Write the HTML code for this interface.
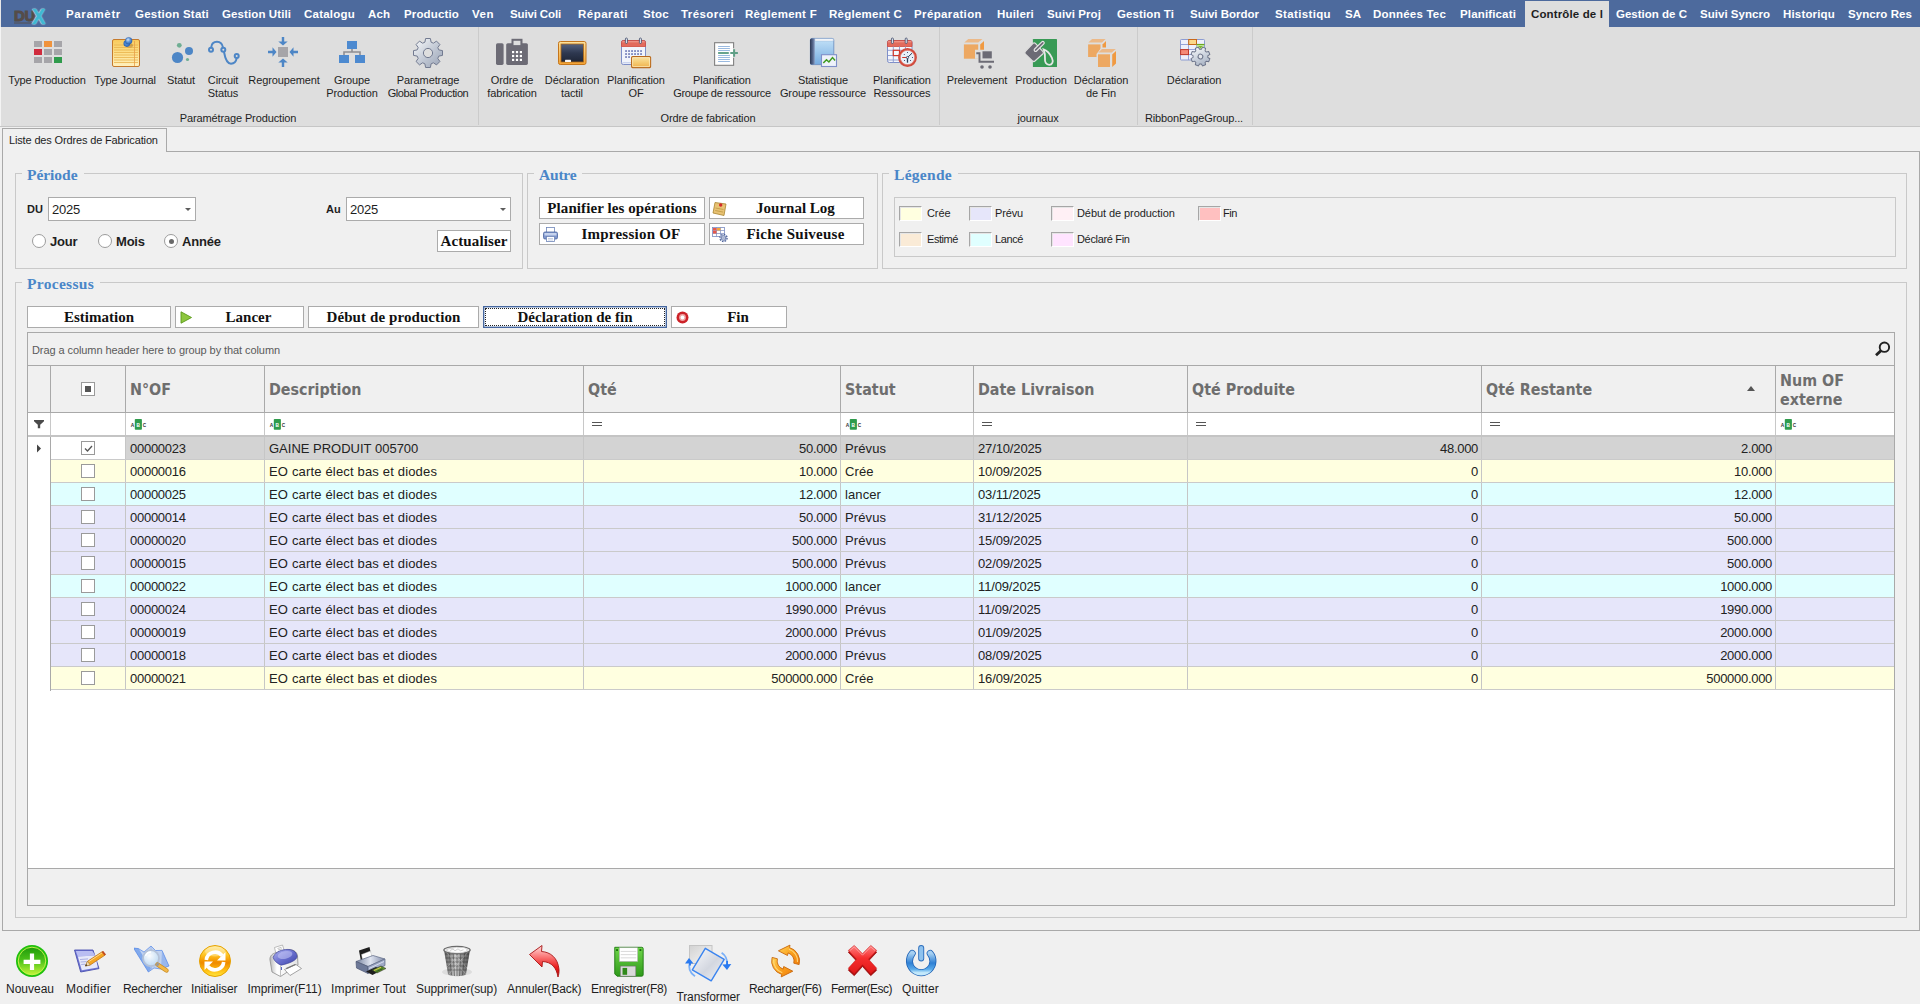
<!DOCTYPE html>
<html lang="fr">
<head>
<meta charset="utf-8">
<title>Liste des Ordres de Fabrication</title>
<style>
*{box-sizing:border-box;margin:0;padding:0}
html,body{width:1920px;height:1004px;overflow:hidden;background:#f0f0f0;font-family:"Liberation Sans","DejaVu Sans",sans-serif;font-size:11px;color:#1e1e1e}
.abs{position:absolute}
#topbar{position:absolute;left:0;top:0;width:1920px;height:27px;background:#4d6a9d}
#topbar .edge{position:absolute;left:0;top:0;width:1px;height:27px;background:#e8e8e8}
.mt{position:absolute;top:0;height:27px;line-height:29px;color:#fff;font-weight:bold;font-size:11.5px;white-space:nowrap}
.mt.act{color:#1e1e1e}
#acttab{position:absolute;left:1525px;top:1px;width:84px;height:26px;background:#dedede}
#ribbon{position:absolute;left:0;top:27px;width:1920px;height:99px;background:#dedede}
#ribbon .edge{position:absolute;left:0;top:0;width:1px;height:99px;background:#f4f4f4}
.rsep{position:absolute;top:0;width:1px;height:98px;background:#cbcbcb}
.ri{letter-spacing:-0.12px;position:absolute;top:47px;width:140px;margin-left:-70px;text-align:center;font-size:11px;line-height:13px;color:#1e1e1e;white-space:nowrap}
.ric{position:absolute;top:10px;width:32px;height:32px;margin-left:-16px;overflow:visible}
.rcap{letter-spacing:-0.12px;position:absolute;top:84px;width:200px;margin-left:-100px;text-align:center;font-size:11px;line-height:14px;color:#1e1e1e;white-space:nowrap}
#ribline{position:absolute;left:0;top:126px;width:1920px;height:1px;background:#c6c6c6}
/* doc tab */
#doctab{position:absolute;left:2px;top:128px;width:165px;height:24px;border:1px solid #a9a9a9;border-bottom:none;background:#f0f0f0;font-size:11px;line-height:23px;padding-left:6px;white-space:nowrap;letter-spacing:-0.15px}
#panel{position:absolute;left:2px;top:151px;width:1918px;height:780px;border:1px solid #a9a9a9;border-top:none}
#panelTop{position:absolute;left:166px;top:151px;width:1754px;height:1px;background:#a9a9a9}
.gb{position:absolute;border:1px solid #c9c9c9}
.gbt{position:absolute;font-family:"Liberation Serif","DejaVu Serif",serif;font-weight:bold;font-size:15.5px;line-height:18px;color:#4a86c8;background:#f0f0f0;padding:0 6px 0 5px;white-space:nowrap}
.btn{position:absolute;background:#fff;border:1px solid #ababab;font-family:"Liberation Serif","DejaVu Serif",serif;font-weight:bold;font-size:15px;text-align:center;white-space:nowrap;color:#111}
.cmb{position:absolute;background:#fff;border:1px solid #ababab;height:24px;font-size:13px;line-height:24px;padding-left:3px;letter-spacing:-0.25px}
.cmb i{position:absolute;right:4px;top:10px;width:0;height:0;border-left:3px solid transparent;border-right:3px solid transparent;border-top:3px solid #5c5c5c}
.lbl{position:absolute;font-weight:bold;font-size:11px;line-height:14px;white-space:nowrap}
.rad{position:absolute;width:14px;height:14px;border:1px solid #9c9c9c;border-radius:50%;background:#fff}
.rad.on::after{content:"";position:absolute;left:3.5px;top:3.5px;width:5px;height:5px;border-radius:50%;background:#686868}
.rlbl{position:absolute;font-weight:bold;font-size:13px;line-height:16px;white-space:nowrap;letter-spacing:-0.2px}
.sw{position:absolute;width:23px;height:15px;border:1px solid #a6a6a6;border-right-color:#fff;border-bottom-color:#fff;box-shadow:inset 1px 1px 0 #e6e6e6}
.lg{position:absolute;font-size:11px;line-height:14px;white-space:nowrap}
/* grid */
#grid{position:absolute;left:27px;top:332px;width:1868px;height:574px;border:1px solid #a9a9a9;background:#fff;overflow:hidden}
#gpanel{position:absolute;left:0;top:0;width:1866px;height:33px;background:#f0f0f0;border-bottom:1px solid #a9a9a9;font-size:11px;line-height:35px;color:#5a5a5a;padding-left:4px;letter-spacing:-0.08px}
#ghead{position:absolute;left:0;top:33px;width:1866px;height:47px;background:#f0f0f0;border-bottom:1px solid #a9a9a9}
.hc{position:absolute;top:0;height:46px;border-left:1px solid #a9a9a9;font-family:"DejaVu Sans","Liberation Sans",sans-serif;font-weight:bold;font-size:16px;color:#6e6e6e;padding-left:3.5px;line-height:47px;white-space:nowrap}
.hx{display:inline-block;transform:scaleX(.894);transform-origin:0 50%}
#gfilter{position:absolute;left:0;top:80px;width:1866px;height:24px;background:#fff;border-bottom:2px solid #c4c4c4}
.fc{position:absolute;top:0;height:22px;border-left:1px solid #c8c8c8}
.row{position:absolute;left:23px;width:1843px;height:23px;border-bottom:1px solid #cacaca;font-size:13px;line-height:23px;color:#222}
.row span{position:absolute;top:0;height:22px;border-left:1px solid #c6c6c6;padding:0 3px 0 4px;white-space:nowrap;overflow:hidden}
.row span.r{text-align:right}
.cb{position:absolute;left:30px;top:4px;width:14px;height:14px;border:1px solid #9a9a9a;background:#fff}
#gfoot{position:absolute;left:0;top:535px;width:1866px;height:37px;background:#f0f0f0;border-top:1px solid #a9a9a9}
.bt{position:absolute;font-size:12px;line-height:15px;white-space:nowrap;color:#1e1e1e}
.bi{position:absolute;top:943px;width:36px;height:36px;margin-left:-18px}
#bfoc{border:1px solid #46679f;box-shadow:inset 0 0 0 .5px #6f8cbc}
#bfoc::after{content:"";position:absolute;left:1px;top:1px;right:1px;bottom:1px;border:1px dotted #222}
</style>
</head>
<body>
<div id="topbar"><div id="acttab"></div><div style="position:absolute;left:14px;top:6px;font-weight:bold;font-size:15px;line-height:19px;color:#554c48;-webkit-text-stroke:1px #554c48;letter-spacing:-.3px;white-space:nowrap">DU</div><div style="position:absolute;left:14px;top:22px;width:18px;height:2px;background:#554c48;opacity:.45"></div><div style="position:absolute;left:31.500px;top:5px;font-weight:bold;font-size:21.500px;line-height:24px;color:#3fb8d2;-webkit-text-stroke:.7px #3fb8d2;white-space:nowrap;text-shadow:0 0 1.500px #fff,0 0 1.500px #fff;transform:scaleX(.92);transform-origin:0 0">X</div><div class="edge"></div>
<div class="mt" style="left:66px;letter-spacing:0.64px">Paramètr</div>
<div class="mt" style="left:135px;letter-spacing:0.24px">Gestion Stati</div>
<div class="mt" style="left:222px;letter-spacing:0.10px">Gestion Utili</div>
<div class="mt" style="left:304px;letter-spacing:0.22px">Catalogu</div>
<div class="mt" style="left:368px;letter-spacing:0.09px">Ach</div>
<div class="mt" style="left:404px;letter-spacing:0.15px">Productio</div>
<div class="mt" style="left:472px;letter-spacing:0.51px">Ven</div>
<div class="mt" style="left:510px;letter-spacing:-0.14px">Suivi Coli</div>
<div class="mt" style="left:578px;letter-spacing:0.50px">Réparati</div>
<div class="mt" style="left:643px;letter-spacing:0.27px">Stoc</div>
<div class="mt" style="left:681px;letter-spacing:0.42px">Trésoreri</div>
<div class="mt" style="left:745px;letter-spacing:0.27px">Règlement F</div>
<div class="mt" style="left:829px;letter-spacing:0.25px">Règlement C</div>
<div class="mt" style="left:914px;letter-spacing:0.37px">Préparation</div>
<div class="mt" style="left:997px;letter-spacing:0.17px">Huileri</div>
<div class="mt" style="left:1047px;letter-spacing:0.10px">Suivi Proj</div>
<div class="mt" style="left:1117px;letter-spacing:0.10px">Gestion Ti</div>
<div class="mt" style="left:1190px;letter-spacing:-0.00px">Suivi Bordor</div>
<div class="mt" style="left:1275px;letter-spacing:0.36px">Statistiqu</div>
<div class="mt" style="left:1345px;letter-spacing:0.01px">SA</div>
<div class="mt" style="left:1373px;letter-spacing:0.21px">Données Tec</div>
<div class="mt" style="left:1460px;letter-spacing:0.15px">Planificati</div>
<div class="mt act" style="left:1531px;letter-spacing:0.13px">Contrôle de l</div>
<div class="mt" style="left:1616px;letter-spacing:0.01px">Gestion de C</div>
<div class="mt" style="left:1700px;letter-spacing:0.03px">Suivi Syncro</div>
<div class="mt" style="left:1783px;letter-spacing:0.17px">Historiqu</div>
<div class="mt" style="left:1848px;letter-spacing:0.07px">Syncro Res</div>
</div>
<div id="ribbon"><div class="edge"></div>
<!--RIBBON-START-->
<div class="rsep" style="left:478px"></div><div class="rsep" style="left:939px"></div><div class="rsep" style="left:1137px"></div><div class="rsep" style="left:1252px"></div>
<!-- 1 Type Production -->
<svg class="ric" style="left:47px" viewBox="0 0 32 32"><g fill="#a6a5a9"><rect x="3" y="4" width="8" height="6"/><rect x="23" y="4" width="8" height="6"/><rect x="13" y="12" width="8" height="6"/><rect x="23" y="12" width="8" height="6"/><rect x="3" y="20" width="8" height="6"/><rect x="13" y="20" width="8" height="6"/></g><rect x="13" y="4" width="8" height="6" fill="#f0933c"/><rect x="3" y="12" width="8" height="6" fill="#d02b3d"/><rect x="23" y="20" width="8" height="6" fill="#2f9b4c"/></svg>
<div class="ri" style="left:47px">Type Production</div>
<!-- 2 Type Journal -->
<svg class="ric" style="left:126px" viewBox="0 0 32 32"><defs><linearGradient id="nj" x1="0" y1="0" x2="0" y2="1"><stop offset="0" stop-color="#f9c95a"/><stop offset=".5" stop-color="#fde08c"/><stop offset="1" stop-color="#fff0bf"/></linearGradient><radialGradient id="pin" cx=".4" cy=".35" r=".7"><stop offset="0" stop-color="#cfe4fb"/><stop offset=".5" stop-color="#5b93d6"/><stop offset="1" stop-color="#2a5fa8"/></radialGradient></defs><rect x="2.5" y="2.5" width="27" height="27" rx="1.5" fill="url(#nj)" stroke="#c57a2c"/><g stroke="#e9b24c" stroke-width=".8"><path d="M4 8h24M4 10.5h24M4 13h24M4 15.5h24M4 18h24M4 20.5h24M4 23h24M4 25.5h24"/></g><path d="M24.5 4v25" stroke="#e7a04a" stroke-width=".8"/><ellipse cx="19.500" cy="8.500" rx="3.500" ry="2" fill="#8a5a20" opacity=".35"/><circle cx="16.800" cy="6.600" r="3.300" fill="#2f66b4"/><circle cx="16.800" cy="6.300" r="2.500" fill="#4a86d0"/><circle cx="18.700" cy="3.800" r="3.400" fill="url(#pin)" stroke="#2a5ca8" stroke-width=".5"/></svg>
<div class="ri" style="left:125px">Type Journal</div>
<!-- 3 Statut -->
<svg class="ric" style="left:181px" viewBox="0 0 32 32"><circle cx="12.5" cy="20.5" r="5.6" fill="#4d86c6"/><circle cx="24" cy="14" r="4" fill="#4d86c6"/><circle cx="14.3" cy="8.3" r="2.4" fill="#6fae93"/><circle cx="22.5" cy="22.5" r="1.6" fill="#6fae93"/></svg>
<div class="ri" style="left:181px">Statut</div>
<!-- 4 Circuit Status -->
<svg class="ric" style="left:223px" viewBox="0 0 32 32"><g fill="none" stroke="#4d86c6" stroke-width="2"><path d="M4.200 10.500C4.500 6.500 7 4.800 10 4.800c3.500 0 5.500 3 6 5.800M17 15c1 5.500 2.800 11.700 7 11.700 3.200 0 5.200-2.500 5.700-5.500"/><circle cx="4" cy="12.700" r="2"/><circle cx="16.300" cy="12.700" r="2"/><circle cx="29.700" cy="19" r="2"/></g></svg>
<div class="ri" style="left:223px">Circuit<br>Status</div>
<!-- 5 Regroupement -->
<svg class="ric" style="left:283px" viewBox="0 0 32 32"><rect x="11" y="10" width="10" height="10" fill="#a6a5a9"/><g fill="#4d86c6"><path d="M14.800 0h2.400v4.500h3.500L16 8.500 11.300 4.500h3.500z"/><path d="M14.800 30h2.400v-4.500h3.500L16 21.500 11.300 25.500h3.500z"/><path d="M1 13.800v2.400h4.500v3.500L9.500 15 5.500 10.300v3.500z"/><path d="M31 13.800v2.400h-4.500v3.500L22.500 15 26.500 10.300v3.500z"/></g></svg>
<div class="ri" style="left:284px">Regroupement</div>
<!-- 6 Groupe Production -->
<svg class="ric" style="left:352px" viewBox="0 0 32 32"><g fill="#4d8ad0"><rect x="11" y="4" width="10" height="8"/><rect x="3" y="18" width="10" height="8"/><rect x="19" y="18" width="10" height="8"/></g><path d="M16 12v3.500M8 18v-3h16v3" fill="none" stroke="#8e8e93" stroke-width="1.600"/></svg>
<div class="ri" style="left:352px">Groupe<br>Production</div>
<!-- 7 Parametrage Global -->
<svg class="ric" style="left:428px" viewBox="0 0 32 32"><defs><linearGradient id="gg" x1="0" y1="0" x2="1" y2="1"><stop offset="0" stop-color="#fbfcfd"/><stop offset=".55" stop-color="#c0c7d3"/><stop offset="1" stop-color="#98a2b5"/></linearGradient></defs><path id="gearp" fill="url(#gg)" stroke="#727a90" stroke-width="1" d="M13.600 1.500h4.800l.7 3.700 2.300 1 3.100-2.100 3.400 3.400-2.100 3.100 1 2.300 3.700.7v4.800l-3.700.7-1 2.300 2.100 3.100-3.400 3.400-3.100-2.100-2.300 1-.7 3.700h-4.800l-.7-3.700-2.300-1-3.100 2.100-3.400-3.400 2.100-3.100-1-2.300-3.700-.7v-4.800l3.700-.7 1-2.300-2.100-3.100 3.400-3.400 3.100 2.100 2.300-1z"/><circle cx="16" cy="16" r="4.600" fill="#dedede" stroke="#727a90" stroke-width="1"/></svg>
<div class="ri" style="left:428px">Parametrage<br><span style="letter-spacing:-0.4px">Global Production</span></div>
<!-- 8 Ordre de fabrication (fax) -->
<svg class="ric" style="left:512px" viewBox="0 0 32 32"><g fill="#6c6b75"><rect x="0" y="6.200" width="7.600" height="21.700" rx="1.600"/><rect x="10.200" y="6.200" width="21.700" height="21.700" rx="1.600"/><rect x="15.500" y="1.800" width="11" height="6"/></g><rect x="17.500" y="3.800" width="6.900" height="4.300" fill="#dedede"/><g fill="#fff"><rect x="16" y="14" width="2.200" height="2.200"/><rect x="19.900" y="14" width="2.200" height="2.200"/><rect x="23.800" y="14" width="2.200" height="2.200"/><rect x="16" y="17.900" width="2.200" height="2.200"/><rect x="19.900" y="17.900" width="2.200" height="2.200"/><rect x="23.800" y="17.900" width="2.200" height="2.200"/><rect x="16" y="21.800" width="2.200" height="2.200"/><rect x="19.900" y="21.800" width="2.200" height="2.200"/><rect x="23.800" y="21.800" width="2.200" height="2.200"/></g></svg>
<div class="ri" style="left:512px">Ordre de<br>fabrication</div>
<!-- 9 Déclaration tactil -->
<svg class="ric" style="left:572px" viewBox="0 0 32 32"><defs><linearGradient id="bb" x1="0" y1="0" x2="0" y2="1"><stop offset="0" stop-color="#55627f"/><stop offset=".5" stop-color="#2e3850"/><stop offset="1" stop-color="#1e2536"/></linearGradient><linearGradient id="bf" x1="0" y1="0" x2="0" y2="1"><stop offset="0" stop-color="#fde3a0"/><stop offset="1" stop-color="#f3a233"/></linearGradient></defs><rect x="2.500" y="4.500" width="27.500" height="23" rx="1.800" fill="url(#bf)" stroke="#c5761c"/><rect x="5" y="7" width="22.500" height="18" fill="url(#bb)" stroke="#b06a1a" stroke-width=".8"/><rect x="9" y="22.800" width="6" height="2.300" rx=".5" fill="#f4f4f4"/></svg>
<div class="ri" style="left:572px">Déclaration<br>tactil</div>
<!-- 10 Planification OF -->
<svg class="ric" style="top:9px;left:636px" viewBox="0 0 32 32"><defs><linearGradient id="cal" x1="0" y1="0" x2="0" y2="1"><stop offset="0" stop-color="#ffffff"/><stop offset="1" stop-color="#dfe6f3"/></linearGradient><linearGradient id="og" x1="0" y1="0" x2="0" y2="1"><stop offset="0" stop-color="#fae3a4"/><stop offset=".5" stop-color="#f5cd76"/><stop offset="1" stop-color="#efb04a"/></linearGradient></defs><rect x="1.500" y="4.500" width="24" height="24" rx="1.800" fill="#f1f4fb" stroke="#7f8fc8"/><path d="M2.500 26.700h22" stroke="#c5d0ec" stroke-width="1.200"/><path d="M1.500 10.500V6.300a1.800 1.800 0 0 1 1.800-1.800h20.400a1.800 1.800 0 0 1 1.800 1.800v4.200z" fill="#e26a5c" stroke="#cf4a3c" stroke-width=".8"/><path d="M2.300 5.800h22.400" stroke="#f2a094" stroke-width="1"/><g fill="#8590c2"><rect x="5.1" y="14.1" width="1.900" height="1.900"/><rect x="8.1" y="14.1" width="1.900" height="1.900"/><rect x="11.1" y="14.1" width="1.900" height="1.900"/><rect x="14.1" y="14.1" width="1.900" height="1.900"/><rect x="17.1" y="14.1" width="1.900" height="1.900"/><rect x="20.1" y="14.1" width="1.900" height="1.900"/><rect x="5.1" y="17.1" width="1.900" height="1.900"/><rect x="8.1" y="17.1" width="1.900" height="1.900"/><rect x="11.1" y="17.1" width="1.900" height="1.900"/><rect x="14.1" y="17.1" width="1.900" height="1.900"/><rect x="17.1" y="17.1" width="1.900" height="1.900"/><rect x="20.1" y="17.1" width="1.900" height="1.900"/><rect x="5.1" y="20.1" width="1.900" height="1.900"/><rect x="8.1" y="20.1" width="1.900" height="1.900"/></g><rect x="5.400" y="2" width="2" height="5.500" rx="1" fill="#e6ebf4" stroke="#3c4866" stroke-width=".8"/><rect x="19.400" y="2" width="2" height="5.500" rx="1" fill="#e6ebf4" stroke="#3c4866" stroke-width=".8"/><rect x="11.600" y="20.600" width="19" height="11" rx="1" fill="url(#og)" stroke="#b8681a" stroke-width="1.100"/><rect x="12.600" y="21.600" width="17" height="9" rx=".5" fill="none" stroke="#fdf0c8" stroke-width=".7"/></svg>
<div class="ri" style="left:636px">Planification<br>OF</div>
<!-- 11 Planification Groupe de ressource -->
<svg class="ric" style="top:9px;left:725px" viewBox="0 0 32 32"><rect x="5.600" y="6.700" width="19" height="22.600" fill="#fff" stroke="#808080" stroke-width="1.100"/><rect x="20.300" y="12.200" width="9.600" height="9.600" fill="#dedede"/><rect x="20.300" y="12.200" width="3.700" height="9.600" fill="#fff"/><path d="M9.100 10.500h11.800M9.100 12.500h11.800M9.100 14.500h11.800M9.100 19.500h11.800M9.100 21.500h11.800M9.100 23.500h11.800M9.100 25.500h11.800" stroke="#8fb2dc" stroke-width=".9"/><path d="M9.100 17h10.700" stroke="#5f9f86" stroke-width="1.900"/><path d="M21.300 17h7.600M25.100 13.200v7.600" stroke="#5f9f86" stroke-width="2"/></svg>
<div class="ri" style="left:722px">Planification<br><span style="letter-spacing:-0.3px">Groupe de ressource</span></div>
<!-- 12 Statistique Groupe ressource -->
<svg class="ric" style="top:9px;left:823px" viewBox="0 0 32 32"><defs><linearGradient id="bk" x1="0" y1="0" x2="0" y2="1"><stop offset="0" stop-color="#c4e2f8"/><stop offset="1" stop-color="#76ace0"/></linearGradient><linearGradient id="bks" x1="0" y1="0" x2="1" y2="0"><stop offset="0" stop-color="#2c3854"/><stop offset=".6" stop-color="#56688e"/><stop offset="1" stop-color="#8a9cc0"/></linearGradient></defs><rect x="3.400" y="2.400" width="23.400" height="26.200" rx="1.600" fill="url(#bk)" stroke="#6f92c4" stroke-width=".9"/><path d="M7.800 2.800h18.500v2.200H7.800z" fill="#fff" stroke="#9fb4d4" stroke-width=".5"/><path d="M3 4a1.600 1.600 0 0 1 1.600-1.600h3.200v26.200H4.600A1.600 1.600 0 0 1 3 27z" fill="url(#bks)"/><rect x="14.500" y="18.700" width="15" height="11.800" fill="#eef2fa" stroke="#7f8fc8" stroke-width="1.100"/><path d="M16.300 27l3.200-3.200 2.400 2.200 3.600-4.400 2.600 2.800" fill="none" stroke="#3f9a1f" stroke-width="1.500"/></svg>
<div class="ri" style="left:823px">Statistique<br>Groupe ressource</div>
<!-- 13 Planification Ressources -->
<svg class="ric" style="top:9px;left:902px" viewBox="0 0 32 32"><rect x="1.500" y="4.500" width="24.500" height="22" rx="1.800" fill="#f4f6fc" stroke="#7f8fc8"/><path d="M1.500 10.500V6.300a1.800 1.800 0 0 1 1.800-1.800h20.900a1.800 1.800 0 0 1 1.800 1.800v4.200z" fill="#e26a5c" stroke="#cf4a3c" stroke-width=".8"/><path d="M2 5.800h23.500" stroke="#f2a094" stroke-width="1"/><path d="M2 14.300h23.500M2 19.500h23.500M2 24h23.500M7.300 10.500v16M13.500 10.500v16M19.500 10.500v16" stroke="#8a99cf" stroke-width=".9"/><rect x="7.300" y="14.300" width="6.200" height="5.300" fill="#f4f6fc" stroke="#d0362a" stroke-width="1.200"/><rect x="5.400" y="2" width="2" height="5.500" rx="1" fill="#e6ebf4" stroke="#3c4866" stroke-width=".8"/><rect x="19.200" y="2" width="2" height="5.500" rx="1" fill="#e6ebf4" stroke="#3c4866" stroke-width=".8"/><circle cx="21.500" cy="21.500" r="8.200" fill="#e8f1f9" stroke="#cf4a3c" stroke-width="2.400"/><circle cx="21.500" cy="21.500" r="7.300" fill="none" stroke="#e98b7f" stroke-width=".7"/><g fill="#2d3f66"><circle cx="21.500" cy="16.500" r=".55"/><circle cx="18.300" cy="18.500" r=".55"/><circle cx="26.500" cy="21.500" r=".55"/><circle cx="18.500" cy="24.500" r=".55"/><circle cx="24.500" cy="24.500" r=".55"/></g><path d="M21.500 21.500L26 17.200" stroke="#2a3a58" stroke-width="1"/><path d="M21.500 21.500v5.200" stroke="#2a3a58" stroke-width="1.300"/><path d="M16.200 21.500h5.300" stroke="#d0362a" stroke-width="1"/><circle cx="21.500" cy="21.500" r="1.100" fill="#e8f1f9" stroke="#2a3a58" stroke-width=".7"/></svg>
<div class="ri" style="left:902px">Planification<br>Ressources</div>
<!-- 14 Prelevement -->
<svg class="ric" style="left:977px" viewBox="0 0 32 32"><path d="M3.300 5.600L7.300 2.100h14.200l-4.300 3.500z" fill="#ecb988"/><path d="M19.200 7.400L23 3.900v14l-3.800 3.800z" fill="#f09a42"/><rect x="2.900" y="7.400" width="14.300" height="14.300" fill="#eda862"/><path d="M14 12.800h18v14h-12.500v-5h-5.500z" fill="#dedede"/><rect x="21.500" y="14.300" width="9.300" height="7.100" fill="#6c6b75"/><path d="M15.300 16.300h3.200v8.400h14.500" fill="none" stroke="#6c6b75" stroke-width="1.900"/><circle cx="21" cy="30" r="1.800" fill="#6c6b75"/><circle cx="29" cy="30" r="1.800" fill="#6c6b75"/></svg>
<div class="ri" style="left:977px">Prelevement</div>
<!-- 15 Production -->
<svg class="ric" style="left:1041px" viewBox="0 0 32 32"><rect x="7.900" y="1.900" width="24.100" height="28.100" rx=".6" fill="#389a55"/><path d="M18.600 12.300c3.500 1 6.300 4.300 8.300 8.500 1.800 4 .3 7-2.700 7-3 0-4.600-2.700-4.200-6 .3-3-.2-6.300-1.400-9.500z" fill="#389a55" stroke="#e6e6e6" stroke-width="1.800"/><path d="M8 6.400c.7-.7 1.700-.7 2.400 0L18 14.600c.6.700.6 1.400 0 2.100l-7.800 7.100c-.8.800-2 .8-2.800 0l-7-6.700c-.8-.9-.8-1.900 0-2.800z" fill="#6c6b75" stroke="#dedede" stroke-width="1.200" stroke-linejoin="round"/><path d="M10.600 13L17.800 5.800" stroke="#e6e6e6" stroke-width="4" stroke-linecap="round"/><path d="M10.600 13L17.800 5.800" stroke="#6c6b75" stroke-width="1.700" stroke-linecap="round"/></svg>
<div class="ri" style="left:1041px">Production</div>
<!-- 16 Déclaration de Fin -->
<svg class="ric" style="left:1101px" viewBox="0 0 32 32"><path d="M3.300 5.600L7.100 2.100h13.500L17 5.600z" fill="#ecb988"/><path d="M17.500 7.400L21 3.900v12.500l-3.500 3.500z" fill="#f09a42"/><rect x="3.100" y="7.400" width="12.400" height="12.600" fill="#eda862"/><path d="M11.500 17l5-6.500h15.500v15l-5 6h-15.500z" fill="#dedede"/><path d="M13.300 15.500L17 12h13.800l-4 3.500z" fill="#ecb988"/><path d="M27.200 17.500L31 14v12.500l-3.800 3.500z" fill="#f09a42"/><rect x="13" y="17.300" width="12" height="12.700" fill="#eda862"/></svg>
<div class="ri" style="left:1101px">Déclaration<br>de Fin</div>
<!-- 17 Déclaration -->
<svg class="ric" style="left:1195px" viewBox="0 0 32 32"><rect x="1.500" y="2.500" width="24" height="20.500" rx=".8" fill="#eef0fb" stroke="#8c9cd2"/><path d="M1.500 7.500h24M1.500 12.500h24M1.500 17.500h24M9.500 2.500v20.500M17.500 2.500v20.500" stroke="#8c9cd2" stroke-width=".9"/><rect x="9.700" y="2.500" width="7.800" height="5" fill="#fbd98a" stroke="#c8681a" stroke-width="1"/><rect x="1.600" y="12.600" width="7.900" height="5" fill="#f58a78" stroke="#c0392b" stroke-width="1"/><rect x="17.600" y="7.600" width="7.400" height="4.400" fill="#c8e8a0"/><path d="M17.500 7.500h8" stroke="#6aa820" stroke-width="1.200"/><path d="M19.500 9h4l-2 2.600z" fill="#7ab830"/><defs><linearGradient id="gg2" x1="0" y1="0" x2="1" y2="1"><stop offset="0" stop-color="#ffffff"/><stop offset=".5" stop-color="#ccd3de"/><stop offset="1" stop-color="#9aa5b8"/></linearGradient></defs><g transform="translate(10.900,9) scale(.66) rotate(22.500 16 16)"><path d="M13.600 1.500h4.800l.7 3.700 2.300 1 3.100-2.100 3.400 3.400-2.100 3.100 1 2.300 3.700.7v4.800l-3.700.7-1 2.300 2.100 3.100-3.400 3.400-3.100-2.100-2.300 1-.7 3.700h-4.800l-.7-3.700-2.300-1-3.100 2.100-3.400-3.400 2.100-3.100-1-2.300-3.700-.7v-4.800l3.700-.7 1-2.300-2.100-3.100 3.400-3.400 3.100 2.100 2.300-1z" fill="url(#gg2)" stroke="#6a7288" stroke-width="1.400"/><circle cx="16" cy="16" r="3.600" fill="#e4e6ec" stroke="#6a7288" stroke-width="1.500"/></g></svg>
<div class="ri" style="left:1194px">Déclaration</div>
<div class="rcap" style="left:238px">Paramétrage Production</div>
<div class="rcap" style="left:708px">Ordre de fabrication</div>
<div class="rcap" style="left:1038px">journaux</div>
<div class="rcap" style="left:1194px">RibbonPageGroup...</div>
<!--RIBBON-END-->
</div>
<div id="ribline"></div>
<div id="doctab">Liste des Ordres de Fabrication</div>
<div id="panelTop"></div>
<div id="panel"></div>
<!--FORM-START-->
<!-- Période -->
<div class="gb" style="left:15px;top:173px;width:508px;height:96px"></div>
<div class="gbt" style="left:22px;top:166px;letter-spacing:-0.04px">Période</div>
<div class="lbl" style="left:27px;top:202px">DU</div>
<div class="cmb" style="left:48px;top:197px;width:148px">2025<i></i></div>
<div class="lbl" style="left:326px;top:202px">Au</div>
<div class="cmb" style="left:346px;top:197px;width:165px">2025<i></i></div>
<div class="rad" style="left:32px;top:234px"></div><div class="rlbl" style="left:50px;top:234px">Jour</div>
<div class="rad" style="left:98px;top:234px"></div><div class="rlbl" style="left:116px;top:234px">Mois</div>
<div class="rad on" style="left:164px;top:234px"></div><div class="rlbl" style="left:182px;top:234px">Année</div>
<div class="btn" style="left:437px;top:230px;width:74px;height:22px;line-height:20px;letter-spacing:.1px">Actualiser</div>
<!-- Autre -->
<div class="gb" style="left:527px;top:173px;width:351px;height:96px"></div>
<div class="gbt" style="left:534px;top:166px;letter-spacing:-0.21px">Autre</div>
<div class="btn" style="left:539px;top:197px;width:166px;height:22px;line-height:20px;letter-spacing:.09px">Planifier les opérations</div>
<div class="btn" style="left:709px;top:197px;width:155px;height:22px;line-height:20px;padding-left:18px">Journal Log<svg style="position:absolute;left:2px;top:2px" width="17" height="17" viewBox="0 0 17 17"><path d="M3 2.500l11 1.500-2 11.500-11-2.500z" fill="#e8c274" stroke="#a8842f" stroke-width=".8"/><path d="M3.500 8l8 1.500M3.200 10.500l8 1.600" stroke="#b8923a" stroke-width=".7"/><circle cx="8.700" cy="5" r="1.700" fill="#d22a2a"/></svg></div>
<div class="btn" style="left:539px;top:223px;width:166px;height:22px;line-height:20px;padding-left:18px;letter-spacing:.23px">Impression OF<svg style="position:absolute;left:2px;top:2px" width="17" height="17" viewBox="0 0 17 17"><rect x="4.500" y="1.500" width="8" height="5" fill="#fff" stroke="#6e86b8" stroke-width=".8"/><rect x="1.500" y="6" width="14" height="7" rx="1.500" fill="#7f96cc" stroke="#4a64a0" stroke-width=".8"/><rect x="2.500" y="7" width="12" height="2.500" fill="#c6d3ee"/><rect x="4.500" y="10.500" width="8" height="5" fill="#fff" stroke="#6e86b8" stroke-width=".8"/><path d="M6 12.500h5M6 14h5" stroke="#9fb0d2" stroke-width=".6"/></svg></div>
<div class="btn" style="left:709px;top:223px;width:155px;height:22px;line-height:20px;padding-left:18px;letter-spacing:.26px">Fiche Suiveuse<svg style="position:absolute;left:2px;top:3px" width="17" height="16" viewBox="0 0 17 16"><rect x=".5" y=".5" width="12" height="9" fill="#fff" stroke="#7a8cc0" stroke-width=".8"/><path d="M.5 3.500h12M.5 6.500h12M4.500 .5v9M8.500 .5v9" stroke="#7a8cc0" stroke-width=".7"/><rect x="1" y="1" width="3.500" height="2.500" fill="#e8584a"/><rect x="5" y="1" width="3.500" height="2.500" fill="#f2a53a"/><rect x="1" y="4" width="3.500" height="2.500" fill="#e8584a"/><circle cx="11.500" cy="11" r="3.600" fill="#dfe5f2" stroke="#4a5f98" stroke-width="1.300" stroke-dasharray="1.500 1.300"/><circle cx="11.500" cy="11" r="2.300" fill="#eef2fa" stroke="#4a5f98" stroke-width=".8"/><circle cx="11.500" cy="11" r=".9" fill="#fff" stroke="#4a5f98" stroke-width=".6"/></svg></div>
<!-- Légende -->
<div class="gb" style="left:882px;top:173px;width:1025px;height:96px"></div>
<div class="gbt" style="left:889px;top:166px;letter-spacing:.29px">Légende</div>
<div class="gb" style="left:894px;top:197px;width:1002px;height:60px"></div>
<div class="sw" style="left:899px;top:206px;background:#ffffe0"></div><div class="lg" style="left:927px;top:206px;letter-spacing:-0.11px">Crée</div>
<div class="sw" style="left:969px;top:206px;background:#e6e6fa"></div><div class="lg" style="left:995px;top:206px;letter-spacing:-0.15px">Prévu</div>
<div class="sw" style="left:1051px;top:206px;background:#fff0f5"></div><div class="lg" style="left:1077px;top:206px;letter-spacing:-0.07px">Début de production</div>
<div class="sw" style="left:1198px;top:206px;background:#ffc0c0"></div><div class="lg" style="left:1223px;top:206px;letter-spacing:-0.43px">Fin</div>
<div class="sw" style="left:899px;top:232px;background:#faebd7"></div><div class="lg" style="left:927px;top:232px;letter-spacing:-0.44px">Estimé</div>
<div class="sw" style="left:969px;top:232px;background:#e0ffff"></div><div class="lg" style="left:995px;top:232px;letter-spacing:-0.4px">Lancé</div>
<div class="sw" style="left:1051px;top:232px;background:#ffe4ff"></div><div class="lg" style="left:1077px;top:232px;letter-spacing:-0.33px">Déclaré Fin</div>
<!-- Processus -->
<div class="gb" style="left:15px;top:282px;width:1892px;height:636px"></div>
<div class="gbt" style="left:22px;top:275px;letter-spacing:.3px">Processus</div>
<div class="btn" style="left:27px;top:306px;width:144px;height:22px;line-height:20px">Estimation</div>
<div class="btn" style="left:175px;top:306px;width:129px;height:22px;line-height:20px;padding-left:18px">Lancer<svg style="position:absolute;left:4px;top:4px" width="12" height="13" viewBox="0 0 12 13"><path d="M1 .8l10.500 5.700L1 12.200z" fill="#8dc63f" stroke="#5a9a1a" stroke-width=".9" stroke-linejoin="round"/></svg></div>
<div class="btn" style="left:308px;top:306px;width:171px;height:22px;line-height:20px;letter-spacing:.09px">Début de production</div>
<div class="btn" id="bfoc" style="left:483px;top:306px;width:184px;height:22px;line-height:20px">Déclaration de fin</div>
<div class="btn" style="left:671px;top:306px;width:116px;height:22px;line-height:20px;padding-left:18px">Fin<svg style="position:absolute;left:4px;top:4px" width="13" height="13" viewBox="0 0 13 13"><circle cx="6.500" cy="6.500" r="6" fill="#cc2228"/><circle cx="6.500" cy="6.500" r="3.400" fill="#f0a4a4"/><circle cx="6.500" cy="6.500" r="1.900" fill="#fff"/></svg></div>
<!--FORM-END-->
<!--GRID-START-->
<div id="grid">
<div id="gpanel">Drag a column header here to group by that column<svg style="position:absolute;left:1844px;top:7px" width="18" height="18" viewBox="0 0 18 18"><circle cx="12.400" cy="7.200" r="4.700" fill="none" stroke="#222" stroke-width="1.900"/><path d="M9 10.600L4 15.200" stroke="#222" stroke-width="2.800"/></svg></div>
<div id="ghead">
<div class="hc" style="left:22px;width:75px"><div class="cb" style="left:30px;top:16px"><b style="position:absolute;left:3px;top:3px;width:6px;height:6px;background:#555"></b></div></div>
<div class="hc" style="left:97px;width:139px"><span class="hx">N°OF</span></div>
<div class="hc" style="left:236px;width:319px"><span class="hx">Description</span></div>
<div class="hc" style="left:555px;width:257px"><span class="hx">Qté</span></div>
<div class="hc" style="left:812px;width:133px"><span class="hx">Statut</span></div>
<div class="hc" style="left:945px;width:214px"><span class="hx">Date Livraison</span></div>
<div class="hc" style="left:1159px;width:294px"><span class="hx">Qté Produite</span></div>
<div class="hc" style="left:1453px;width:294px"><span class="hx">Qté Restante</span><i style="position:absolute;left:265px;top:20px;width:0;height:0;border-left:4.500px solid transparent;border-right:4.500px solid transparent;border-bottom:5px solid #555"></i></div>
<div class="hc" style="left:1747px;width:119px;line-height:19px;padding-top:5px"><span class="hx">Num OF<br>externe</span></div>
</div>
<div id="gfilter"><svg style="position:absolute;left:5px;top:6px" width="12" height="12" viewBox="0 0 12 12"><path d="M1 1h10v1.200L7.200 5.800v3.400H4.800V5.800L1 2.200z" fill="#4a4a4a"/></svg>
<div class="fc" style="left:22px;width:75px"></div>
<div class="fc" style="left:97px;width:139px"><svg style="position:absolute;left:5px;top:6px;overflow:visible" width="17" height="11" viewBox="0 0 17 11"><rect x="3.800" y="0" width="7.100" height="10.700" rx=".8" fill="#2f9b4c"/><text x="-.3" y="7.900" font-family="Liberation Sans,sans-serif" font-weight="bold" font-size="5.600" fill="#333" textLength="3.500" lengthAdjust="spacingAndGlyphs">A</text><text x="5.600" y="7.900" font-family="Liberation Sans,sans-serif" font-weight="bold" font-size="5.600" fill="#fff" textLength="3.500" lengthAdjust="spacingAndGlyphs">B</text><text x="11.700" y="7.900" font-family="Liberation Sans,sans-serif" font-weight="bold" font-size="5.600" fill="#333" textLength="3.400" lengthAdjust="spacingAndGlyphs">C</text></svg></div>
<div class="fc" style="left:236px;width:319px"><svg style="position:absolute;left:5px;top:6px;overflow:visible" width="17" height="11" viewBox="0 0 17 11"><rect x="3.800" y="0" width="7.100" height="10.700" rx=".8" fill="#2f9b4c"/><text x="-.3" y="7.900" font-family="Liberation Sans,sans-serif" font-weight="bold" font-size="5.600" fill="#333" textLength="3.500" lengthAdjust="spacingAndGlyphs">A</text><text x="5.600" y="7.900" font-family="Liberation Sans,sans-serif" font-weight="bold" font-size="5.600" fill="#fff" textLength="3.500" lengthAdjust="spacingAndGlyphs">B</text><text x="11.700" y="7.900" font-family="Liberation Sans,sans-serif" font-weight="bold" font-size="5.600" fill="#333" textLength="3.400" lengthAdjust="spacingAndGlyphs">C</text></svg></div>
<div class="fc" style="left:555px;width:257px"><svg style="position:absolute;left:8px;top:9px" width="10" height="5" viewBox="0 0 10 5"><path d="M0 .5h10M0 3.500h10" stroke="#555" stroke-width="1"/></svg></div>
<div class="fc" style="left:812px;width:133px"><svg style="position:absolute;left:5px;top:6px;overflow:visible" width="17" height="11" viewBox="0 0 17 11"><rect x="3.800" y="0" width="7.100" height="10.700" rx=".8" fill="#2f9b4c"/><text x="-.3" y="7.900" font-family="Liberation Sans,sans-serif" font-weight="bold" font-size="5.600" fill="#333" textLength="3.500" lengthAdjust="spacingAndGlyphs">A</text><text x="5.600" y="7.900" font-family="Liberation Sans,sans-serif" font-weight="bold" font-size="5.600" fill="#fff" textLength="3.500" lengthAdjust="spacingAndGlyphs">B</text><text x="11.700" y="7.900" font-family="Liberation Sans,sans-serif" font-weight="bold" font-size="5.600" fill="#333" textLength="3.400" lengthAdjust="spacingAndGlyphs">C</text></svg></div>
<div class="fc" style="left:945px;width:214px"><svg style="position:absolute;left:8px;top:9px" width="10" height="5" viewBox="0 0 10 5"><path d="M0 .5h10M0 3.500h10" stroke="#555" stroke-width="1"/></svg></div>
<div class="fc" style="left:1159px;width:294px"><svg style="position:absolute;left:8px;top:9px" width="10" height="5" viewBox="0 0 10 5"><path d="M0 .5h10M0 3.500h10" stroke="#555" stroke-width="1"/></svg></div>
<div class="fc" style="left:1453px;width:294px"><svg style="position:absolute;left:8px;top:9px" width="10" height="5" viewBox="0 0 10 5"><path d="M0 .5h10M0 3.500h10" stroke="#555" stroke-width="1"/></svg></div>
<div class="fc" style="left:1747px;width:119px"><svg style="position:absolute;left:5px;top:6px;overflow:visible" width="17" height="11" viewBox="0 0 17 11"><rect x="3.800" y="0" width="7.100" height="10.700" rx=".8" fill="#2f9b4c"/><text x="-.3" y="7.900" font-family="Liberation Sans,sans-serif" font-weight="bold" font-size="5.600" fill="#333" textLength="3.500" lengthAdjust="spacingAndGlyphs">A</text><text x="5.600" y="7.900" font-family="Liberation Sans,sans-serif" font-weight="bold" font-size="5.600" fill="#fff" textLength="3.500" lengthAdjust="spacingAndGlyphs">B</text><text x="11.700" y="7.900" font-family="Liberation Sans,sans-serif" font-weight="bold" font-size="5.600" fill="#333" textLength="3.400" lengthAdjust="spacingAndGlyphs">C</text></svg></div>
</div>
<div class="row" style="top:104px;background:#fff">
<span style="left:-1px;width:75px;background:#fff"><div class="cb" style="left:30px;top:4px"><svg style="position:absolute;left:1px;top:1px" width="11" height="11" viewBox="0 0 11 11"><path d="M2 5.500l2.500 2.500L9 3" fill="none" stroke="#555" stroke-width="1.300"/></svg></div></span>
<span style="background:#d3d3d3;left:74px;width:139px;letter-spacing:-0.27px">00000023</span>
<span style="background:#d3d3d3;left:213px;width:319px;letter-spacing:0px">GAINE PRODUIT 005700</span>
<span class="r" style="background:#d3d3d3;left:532px;width:257px;letter-spacing:-0.3px">50.000</span>
<span style="background:#d3d3d3;left:789px;width:133px;letter-spacing:0.1px">Prévus</span>
<span style="background:#d3d3d3;left:922px;width:214px;letter-spacing:-0.14px">27/10/2025</span>
<span class="r" style="background:#d3d3d3;left:1136px;width:294px;letter-spacing:-0.3px">48.000</span>
<span class="r" style="background:#d3d3d3;left:1430px;width:294px;letter-spacing:-0.3px">2.000</span>
<span style="background:#d3d3d3;left:1724px;width:119px;letter-spacing:0px"></span>
</div>
<div class="row" style="top:127px;background:#ffffe0">
<span style="left:-1px;width:75px;background:#ffffe0"><div class="cb" style="left:30px;top:4px"></div></span>
<span style="left:74px;width:139px;letter-spacing:-0.27px">00000016</span>
<span style="left:213px;width:319px;letter-spacing:0.17px">EO carte élect bas et diodes</span>
<span class="r" style="left:532px;width:257px;letter-spacing:-0.3px">10.000</span>
<span style="left:789px;width:133px;letter-spacing:0.1px">Crée</span>
<span style="left:922px;width:214px;letter-spacing:-0.14px">10/09/2025</span>
<span class="r" style="left:1136px;width:294px;letter-spacing:-0.3px">0</span>
<span class="r" style="left:1430px;width:294px;letter-spacing:-0.3px">10.000</span>
<span style="left:1724px;width:119px;letter-spacing:0px"></span>
</div>
<div class="row" style="top:150px;background:#e0ffff">
<span style="left:-1px;width:75px;background:#e0ffff"><div class="cb" style="left:30px;top:4px"></div></span>
<span style="left:74px;width:139px;letter-spacing:-0.27px">00000025</span>
<span style="left:213px;width:319px;letter-spacing:0.17px">EO carte élect bas et diodes</span>
<span class="r" style="left:532px;width:257px;letter-spacing:-0.3px">12.000</span>
<span style="left:789px;width:133px;letter-spacing:0.1px">lancer</span>
<span style="left:922px;width:214px;letter-spacing:-0.14px">03/11/2025</span>
<span class="r" style="left:1136px;width:294px;letter-spacing:-0.3px">0</span>
<span class="r" style="left:1430px;width:294px;letter-spacing:-0.3px">12.000</span>
<span style="left:1724px;width:119px;letter-spacing:0px"></span>
</div>
<div class="row" style="top:173px;background:#e6e6fa">
<span style="left:-1px;width:75px;background:#e6e6fa"><div class="cb" style="left:30px;top:4px"></div></span>
<span style="left:74px;width:139px;letter-spacing:-0.27px">00000014</span>
<span style="left:213px;width:319px;letter-spacing:0.17px">EO carte élect bas et diodes</span>
<span class="r" style="left:532px;width:257px;letter-spacing:-0.3px">50.000</span>
<span style="left:789px;width:133px;letter-spacing:0.1px">Prévus</span>
<span style="left:922px;width:214px;letter-spacing:-0.14px">31/12/2025</span>
<span class="r" style="left:1136px;width:294px;letter-spacing:-0.3px">0</span>
<span class="r" style="left:1430px;width:294px;letter-spacing:-0.3px">50.000</span>
<span style="left:1724px;width:119px;letter-spacing:0px"></span>
</div>
<div class="row" style="top:196px;background:#e6e6fa">
<span style="left:-1px;width:75px;background:#e6e6fa"><div class="cb" style="left:30px;top:4px"></div></span>
<span style="left:74px;width:139px;letter-spacing:-0.27px">00000020</span>
<span style="left:213px;width:319px;letter-spacing:0.17px">EO carte élect bas et diodes</span>
<span class="r" style="left:532px;width:257px;letter-spacing:-0.3px">500.000</span>
<span style="left:789px;width:133px;letter-spacing:0.1px">Prévus</span>
<span style="left:922px;width:214px;letter-spacing:-0.14px">15/09/2025</span>
<span class="r" style="left:1136px;width:294px;letter-spacing:-0.3px">0</span>
<span class="r" style="left:1430px;width:294px;letter-spacing:-0.3px">500.000</span>
<span style="left:1724px;width:119px;letter-spacing:0px"></span>
</div>
<div class="row" style="top:219px;background:#e6e6fa">
<span style="left:-1px;width:75px;background:#e6e6fa"><div class="cb" style="left:30px;top:4px"></div></span>
<span style="left:74px;width:139px;letter-spacing:-0.27px">00000015</span>
<span style="left:213px;width:319px;letter-spacing:0.17px">EO carte élect bas et diodes</span>
<span class="r" style="left:532px;width:257px;letter-spacing:-0.3px">500.000</span>
<span style="left:789px;width:133px;letter-spacing:0.1px">Prévus</span>
<span style="left:922px;width:214px;letter-spacing:-0.14px">02/09/2025</span>
<span class="r" style="left:1136px;width:294px;letter-spacing:-0.3px">0</span>
<span class="r" style="left:1430px;width:294px;letter-spacing:-0.3px">500.000</span>
<span style="left:1724px;width:119px;letter-spacing:0px"></span>
</div>
<div class="row" style="top:242px;background:#e0ffff">
<span style="left:-1px;width:75px;background:#e0ffff"><div class="cb" style="left:30px;top:4px"></div></span>
<span style="left:74px;width:139px;letter-spacing:-0.27px">00000022</span>
<span style="left:213px;width:319px;letter-spacing:0.17px">EO carte élect bas et diodes</span>
<span class="r" style="left:532px;width:257px;letter-spacing:-0.3px">1000.000</span>
<span style="left:789px;width:133px;letter-spacing:0.1px">lancer</span>
<span style="left:922px;width:214px;letter-spacing:-0.14px">11/09/2025</span>
<span class="r" style="left:1136px;width:294px;letter-spacing:-0.3px">0</span>
<span class="r" style="left:1430px;width:294px;letter-spacing:-0.3px">1000.000</span>
<span style="left:1724px;width:119px;letter-spacing:0px"></span>
</div>
<div class="row" style="top:265px;background:#e6e6fa">
<span style="left:-1px;width:75px;background:#e6e6fa"><div class="cb" style="left:30px;top:4px"></div></span>
<span style="left:74px;width:139px;letter-spacing:-0.27px">00000024</span>
<span style="left:213px;width:319px;letter-spacing:0.17px">EO carte élect bas et diodes</span>
<span class="r" style="left:532px;width:257px;letter-spacing:-0.3px">1990.000</span>
<span style="left:789px;width:133px;letter-spacing:0.1px">Prévus</span>
<span style="left:922px;width:214px;letter-spacing:-0.14px">11/09/2025</span>
<span class="r" style="left:1136px;width:294px;letter-spacing:-0.3px">0</span>
<span class="r" style="left:1430px;width:294px;letter-spacing:-0.3px">1990.000</span>
<span style="left:1724px;width:119px;letter-spacing:0px"></span>
</div>
<div class="row" style="top:288px;background:#e6e6fa">
<span style="left:-1px;width:75px;background:#e6e6fa"><div class="cb" style="left:30px;top:4px"></div></span>
<span style="left:74px;width:139px;letter-spacing:-0.27px">00000019</span>
<span style="left:213px;width:319px;letter-spacing:0.17px">EO carte élect bas et diodes</span>
<span class="r" style="left:532px;width:257px;letter-spacing:-0.3px">2000.000</span>
<span style="left:789px;width:133px;letter-spacing:0.1px">Prévus</span>
<span style="left:922px;width:214px;letter-spacing:-0.14px">01/09/2025</span>
<span class="r" style="left:1136px;width:294px;letter-spacing:-0.3px">0</span>
<span class="r" style="left:1430px;width:294px;letter-spacing:-0.3px">2000.000</span>
<span style="left:1724px;width:119px;letter-spacing:0px"></span>
</div>
<div class="row" style="top:311px;background:#e6e6fa">
<span style="left:-1px;width:75px;background:#e6e6fa"><div class="cb" style="left:30px;top:4px"></div></span>
<span style="left:74px;width:139px;letter-spacing:-0.27px">00000018</span>
<span style="left:213px;width:319px;letter-spacing:0.17px">EO carte élect bas et diodes</span>
<span class="r" style="left:532px;width:257px;letter-spacing:-0.3px">2000.000</span>
<span style="left:789px;width:133px;letter-spacing:0.1px">Prévus</span>
<span style="left:922px;width:214px;letter-spacing:-0.14px">08/09/2025</span>
<span class="r" style="left:1136px;width:294px;letter-spacing:-0.3px">0</span>
<span class="r" style="left:1430px;width:294px;letter-spacing:-0.3px">2000.000</span>
<span style="left:1724px;width:119px;letter-spacing:0px"></span>
</div>
<div class="row" style="top:334px;background:#ffffe0">
<span style="left:-1px;width:75px;background:#ffffe0"><div class="cb" style="left:30px;top:4px"></div></span>
<span style="left:74px;width:139px;letter-spacing:-0.27px">00000021</span>
<span style="left:213px;width:319px;letter-spacing:0.17px">EO carte élect bas et diodes</span>
<span class="r" style="left:532px;width:257px;letter-spacing:-0.3px">500000.000</span>
<span style="left:789px;width:133px;letter-spacing:0.1px">Crée</span>
<span style="left:922px;width:214px;letter-spacing:-0.14px">16/09/2025</span>
<span class="r" style="left:1136px;width:294px;letter-spacing:-0.3px">0</span>
<span class="r" style="left:1430px;width:294px;letter-spacing:-0.3px">500000.000</span>
<span style="left:1724px;width:119px;letter-spacing:0px"></span>
</div>
<div style="position:absolute;left:0;top:104px;width:22px;height:254px;background:#fff"></div>
<div style="position:absolute;left:22px;top:104px;width:1px;height:254px;background:#a9a9a9"></div>
<svg style="position:absolute;left:8px;top:111px" width="6" height="9" viewBox="0 0 6 9"><path d="M1 0.500l4 4-4 4z" fill="#444"/></svg>
<div id="gfoot"></div>
</div>
<!--GRID-END-->
<!--BOTTOM-START-->
<svg width="0" height="0" style="position:absolute"><defs>
<radialGradient id="gGreen" cx=".5" cy=".3" r=".8"><stop offset="0" stop-color="#b6f58a"/><stop offset=".45" stop-color="#3fd01d"/><stop offset="1" stop-color="#1f9a0a"/></radialGradient>
<radialGradient id="gOr" cx=".5" cy=".85" r=".9"><stop offset="0" stop-color="#ffe93a"/><stop offset=".5" stop-color="#ffb000"/><stop offset="1" stop-color="#f07c00"/></radialGradient>
<linearGradient id="gRed" x1="0" y1="0" x2="0" y2="1"><stop offset="0" stop-color="#ff8a8a"/><stop offset=".5" stop-color="#ee2222"/><stop offset="1" stop-color="#b80a0a"/></linearGradient>
<linearGradient id="gBlue" x1="0" y1="0" x2="0" y2="1"><stop offset="0" stop-color="#9fd0f5"/><stop offset=".5" stop-color="#3f93dd"/><stop offset="1" stop-color="#1f6fc0"/></linearGradient>
<linearGradient id="gOrA" x1="0" y1="0" x2="0" y2="1"><stop offset="0" stop-color="#ffc660"/><stop offset="1" stop-color="#ee7d12"/></linearGradient>
<linearGradient id="gGr2" x1="0" y1="0" x2="0" y2="1"><stop offset="0" stop-color="#6fd64a"/><stop offset="1" stop-color="#2f9a1a"/></linearGradient>
<linearGradient id="gNote" x1="0" y1="0" x2="1" y2="1"><stop offset="0" stop-color="#b9c2f2"/><stop offset="1" stop-color="#5b67c9"/></linearGradient>
<linearGradient id="gTrash" x1="0" y1="0" x2="1" y2="0"><stop offset="0" stop-color="#5a5a5a"/><stop offset=".45" stop-color="#c9c9c9"/><stop offset="1" stop-color="#4a4a4a"/></linearGradient>
<linearGradient id="gSq" x1="0" y1="0" x2="1" y2="1"><stop offset="0" stop-color="#f4f8ff"/><stop offset="1" stop-color="#a9c6f0"/></linearGradient>
<linearGradient id="gGreen2" x1="0" y1="0" x2="0" y2="1"><stop offset="0" stop-color="#1f9a0c"/><stop offset=".5" stop-color="#4fc41a"/><stop offset="1" stop-color="#c2f43a"/></linearGradient>
<linearGradient id="gOr2" x1="0" y1="0" x2="0" y2="1"><stop offset="0" stop-color="#ffe88e"/><stop offset=".3" stop-color="#ffc524"/><stop offset=".5" stop-color="#f59500"/><stop offset=".56" stop-color="#ef8a00"/><stop offset=".8" stop-color="#ffbe12"/><stop offset="1" stop-color="#ffe640"/></linearGradient>
<radialGradient id="gLens" cx=".4" cy=".35" r=".75"><stop offset="0" stop-color="#ffffff" stop-opacity=".95"/><stop offset="1" stop-color="#b8d8f2" stop-opacity=".85"/></radialGradient>
<linearGradient id="gDome" x1="0" y1="0" x2="1" y2="1"><stop offset="0" stop-color="#b4b8f2"/><stop offset=".5" stop-color="#6a70d0"/><stop offset="1" stop-color="#3d44a8"/></linearGradient>
<linearGradient id="gBody" x1="0" y1="0" x2="1" y2="0"><stop offset="0" stop-color="#b8b8b8"/><stop offset=".25" stop-color="#ffffff"/><stop offset="1" stop-color="#e4e4e4"/></linearGradient>
<linearGradient id="gPr2" x1="0" y1="0" x2="1" y2="0"><stop offset="0" stop-color="#77839f"/><stop offset=".5" stop-color="#dfe4f0"/><stop offset="1" stop-color="#7f8aa8"/></linearGradient>
<linearGradient id="gRedA" x1="0" y1="0" x2="0" y2="1"><stop offset="0" stop-color="#ffe0e0"/><stop offset=".35" stop-color="#fb7a7a"/><stop offset=".7" stop-color="#ea1c1c"/><stop offset="1" stop-color="#b40808"/></linearGradient>
<linearGradient id="gSq2" x1="0" y1="0" x2="1" y2="1"><stop offset="0" stop-color="#fafbfd"/><stop offset=".55" stop-color="#d3d7e0"/><stop offset="1" stop-color="#f0f2f6"/></linearGradient>
<linearGradient id="gGy" x1="0" y1="0" x2="1" y2="1"><stop offset="0" stop-color="#d2d2d2"/><stop offset="1" stop-color="#f8f8f8"/></linearGradient>
<linearGradient id="gRing" x1="0" y1="0" x2="0" y2="1"><stop offset="0" stop-color="#a6d0f2"/><stop offset=".5" stop-color="#2f80d4"/><stop offset=".82" stop-color="#58aaea"/><stop offset="1" stop-color="#c4e9fb"/></linearGradient>
<linearGradient id="gRed2" x1="0" y1="0" x2="0" y2="1"><stop offset="0" stop-color="#ff8080"/><stop offset=".45" stop-color="#f52e2e"/><stop offset="1" stop-color="#e01818"/></linearGradient>
<linearGradient id="gOrB" x1="0" y1="0" x2="1" y2="1"><stop offset="0" stop-color="#ffd45a"/><stop offset=".5" stop-color="#fba21e"/><stop offset="1" stop-color="#f07e0c"/></linearGradient>
</defs></svg>
<!-- Nouveau -->
<svg class="bi" style="left:31.700px" viewBox="0 0 36 36"><circle cx="18" cy="18" r="16" fill="#1fc00c"/><circle cx="18" cy="18" r="13.800" fill="url(#gGreen2)" stroke="#d2f650" stroke-width=".9"/><path d="M18 10.600v16.400M9.600 18.800h16.800" stroke="#fff" stroke-width="4.200"/></svg>
<!-- Modifier -->
<svg class="bi" style="left:89px" viewBox="0 0 36 36"><path d="M3.500 7h18.500l6 18.600-18.300 3.400z" fill="#7076d4" stroke="#4a50b0" stroke-width=".9" stroke-linejoin="round"/><path d="M4.800 8h16.500l3 4.500-17.500 1z" fill="#b9bdf2"/><path d="M6.800 13.500l17.500-1 2.500 12-16 2.800z" fill="#e6e8fa"/><path d="M9 16.500l8-.6M9.600 19l6-.4M10.200 21.500l4-.3" stroke="#9aa0dc" stroke-width=".8"/><path d="M14.300 23l2.200-4.700L31.500 8.500l2.700 3.500-15 10z" fill="#f5a623" stroke="#b86a08" stroke-width=".7" stroke-linejoin="round"/><path d="M17.500 18.800L32 9.300" stroke="#ffd98a" stroke-width="1"/><path d="M14.300 23l2.200-4.700 2.700 3.700z" fill="#f4dcae" stroke="#8a6a3a" stroke-width=".5"/><path d="M14.300 23l.9-1.900 1.100 1.400z" fill="#222"/><path d="M30.600 9.100l1.700-1.100 2.700 3.500-1.600 1.100z" fill="#c04a22"/></svg>
<!-- Rechercher -->
<svg class="bi" style="left:152px" viewBox="0 0 36 36"><path d="M-.5 5l5 .6 5.500 3.400 7-6 4.500 4.500 6.500-.1 7 15.600-8 3-7-1-5.600 4z" fill="#8fb4f0" fill-opacity=".5" stroke="#3f78e6" stroke-width=".8" stroke-opacity=".75" stroke-linejoin="round"/><path d="M-.5 5l5 .6L17 26l-2.600 3z" fill="#4d86ea" fill-opacity=".55"/><path d="M28 7.400l7 15.600-8 3z" fill="#4d86ea" fill-opacity=".35"/><path d="M17 3l.5 23M10 9l7 17" stroke="#6a98ee" stroke-width=".6" opacity=".6"/><circle cx="17" cy="15.200" r="8" fill="url(#gLens)" stroke="#b4c2d8" stroke-width="1.800"/><path d="M11.500 13c.8-2.500 3-4 5.500-4" stroke="#fff" stroke-width="1.300" fill="none"/><path d="M23.500 21.500l9 6" stroke="#c98a1e" stroke-width="4.400" stroke-linecap="round"/><path d="M23.500 21.500l9 6" stroke="#f2b84a" stroke-width="2.800" stroke-linecap="round"/><path d="M22.500 20.800l2.200 1.500" stroke="#9a9a9a" stroke-width="3"/></svg>
<!-- Initialiser -->
<svg class="bi" style="left:215px" viewBox="0 0 36 36"><circle cx="18" cy="18" r="15.500" fill="url(#gOr2)" stroke="#e6a200" stroke-width="1"/><ellipse cx="18" cy="8.500" rx="10" ry="5" fill="#fff" opacity=".3"/><path d="M9.300 17a8.800 8.800 0 0 1 15.800-4.300" fill="none" stroke="#fff" stroke-width="3.600"/><path d="M28.500 9v8.500h-8.500z" fill="#fff"/><path d="M26.700 19a8.800 8.800 0 0 1-15.800 4.300" fill="none" stroke="#fff" stroke-width="3.600"/><path d="M7.500 27v-8.500h8.500z" fill="#fff"/></svg>
<!-- Imprimer -->
<svg class="bi" style="left:285px" viewBox="0 0 36 36"><path d="M7.500 4.500l8-2.500 2 6.500-8.500 2.500z" fill="#fff" stroke="#a0a0a0" stroke-width=".7"/><path d="M10.500 5.500l4-1.200M11 7l4-1.200" stroke="#999" stroke-width=".6"/><path d="M3 17c-.5-3 1.500-6 5-7l13-3c5-.8 9 1.500 9.500 6l.5 9-17.500 11.500-8.500-4.500z" fill="url(#gBody)" stroke="#8c8c8c" stroke-width=".8" stroke-linejoin="round"/><path d="M6.200 14.500c1.300-4.500 6-7.300 12.500-8 6.500-.6 11 2 11.300 7 .1 3.500-7 6.800-16 8.700-4-1.800-7-4.500-7.800-7.700z" fill="url(#gDome)" stroke="#3a3f98" stroke-width=".7"/><ellipse cx="18" cy="12" rx="7.500" ry="3.800" fill="#c8cbf8" opacity=".55" transform="rotate(-12 18 12)"/><path d="M17.500 26.500l11.500-5 5.500 4-11.500 7z" fill="#fff" stroke="#8e8e8e" stroke-width=".8" stroke-linejoin="round"/><path d="M19 25l9-4 1 .8-9.500 4.500z" fill="#777"/><path d="M13.500 22.500v10.500" stroke="#a8a8a8" stroke-width=".7"/><path d="M14.500 24v3" stroke="#5a68c8" stroke-width="1"/></svg>
<!-- Imprimer Tout -->
<svg class="bi" style="left:370px" viewBox="0 0 36 36"><path d="M7 7.500l10.500-3.500 2.500 12-11 2.500z" fill="#1e1e1e"/><path d="M9.500 11.500l9-3.500 2 8.500-9.500 3z" fill="#fff" stroke="#bbb" stroke-width=".4"/><path d="M4 18.500l17-6 12 3.500-17 7.500z" fill="url(#gPr2)" stroke="#5c6784" stroke-width=".7" stroke-linejoin="round"/><path d="M4 18.500l12 5v7l-11.500-5.500z" fill="#6d7998" stroke="#4e5874" stroke-width=".7" stroke-linejoin="round"/><path d="M16 23.500l17-7.500v6.500l-17 8z" fill="#9fa9c6" stroke="#5c6784" stroke-width=".7" stroke-linejoin="round"/><path d="M17 25.500l15-7" stroke="#d8deee" stroke-width="1"/><path d="M14 28.500l10-4.500 6 3-9.500 5z" fill="#1e1e1e"/><path d="M20 27l9-4 5 2.500-9 4.500z" fill="#5f8f2c" stroke="#2e2e2e" stroke-width=".5"/><path d="M22 27.500l7-3.200" stroke="#d6c84a" stroke-width="1"/><path d="M24.500 28.500l6-2.700" stroke="#2e5a1a" stroke-width="1"/></svg>
<!-- Supprimer -->
<svg class="bi" style="left:457px" viewBox="0 0 36 36"><ellipse cx="18" cy="29" rx="15" ry="4" fill="#000" opacity=".08"/><path d="M5 7h26l-4 24c-1 3-17 3-18 0z" fill="url(#gTrash)"/><path d="M6 11h24M6.600 15h22.800M7.200 19h21.600M7.900 23h20.200M8.500 27h19M10 7l2.500 25M14 7l1.500 26M18 7v26M22 7l-1.500 26M26 7l-2.500 25" stroke="#1a1a1a" stroke-width=".7" opacity=".6"/><path d="M7 9l20 22M29 9L10 31M13 8l15 17M23 8L8 24" stroke="#f4f4f4" stroke-width=".5" opacity=".55"/><ellipse cx="18" cy="7" rx="13.200" ry="3.600" fill="#e8e8e8" stroke="#6a6a6a" stroke-width="1.200"/><path d="M7.500 7c3-2.500 6-1 8-2.300 2.500-1.200 5 .5 7.500-.2 2.500-.5 4.500 1.300 5.500 2.500-2 2.500-7 3-10.500 3s-8.500-.8-10.500-3z" fill="#fcfcfc" stroke="#b8b8b8" stroke-width=".5"/><path d="M11 7.500l3-1.500 2 1.800 3-2 2.500 2 3-1" stroke="#a8a8a8" stroke-width=".5" fill="none"/></svg>
<!-- Annuler -->
<svg class="bi" style="left:545px" viewBox="0 0 36 36"><path d="M2.500 11.500L15 2.500l-.5 6c9 .5 16.500 6.500 17.500 18 .2 2.500-.3 5.500-1 7.500-1.500-9-6-15-15.500-15.500l-.5 5.500z" fill="url(#gRedA)" stroke="#a81414" stroke-width=".9" stroke-linejoin="round"/></svg>
<!-- Enregistrer -->
<svg class="bi" style="width:33px;height:33px;margin-left:-16.500px;top:944.500px;left:628.400px" viewBox="0 0 36 36"><path d="M3 2.500h29.500a1.500 1.500 0 0 1 1.500 1.500v28.500a1.500 1.500 0 0 1-1.500 1.500H5.500L3 31.500z" fill="url(#gGr2)" stroke="#1f7a12" stroke-width="1"/><rect x="8" y="3" width="20" height="15" fill="#fff" stroke="#a8a8a8" stroke-width=".6"/><path d="M9.500 7h17M9.500 10.500h17M9.500 14h17" stroke="#d5d5d5" stroke-width="1"/><rect x="9" y="23" width="17" height="11" fill="#d9d9d9" stroke="#6a6a6a" stroke-width=".6"/><rect x="11.500" y="25" width="5" height="7.500" fill="#2f8a1a"/><rect x="30" y="4.500" width="2" height="2" fill="#156a0a"/><rect x="4.500" y="4.500" width="2" height="2" fill="#156a0a"/></svg>
<!-- Transformer -->
<svg class="abs" style="left:682px;top:943.500px" width="52" height="40" viewBox="0 0 52 40"><rect x="7.500" y="1.500" width="22.500" height="18" fill="url(#gGy)" stroke="#c4c4c4"/><path d="M23.300 4.300l18.900 11-13 21.500-18.900-11z" fill="url(#gSq2)" stroke="#3a84f0" stroke-width="1.400" stroke-linejoin="round"/><path d="M8 18c-1.800 5-.3 10.500 5 14.300" fill="none" stroke="#7ab0f8" stroke-width="1.800"/><path d="M8 17.500v4" stroke="#2a7af0" stroke-width="1.800"/><path d="M3 19.500l4-5.500 4.500 5.500z" fill="#2a7af0"/><path d="M39.600 8.800c4 2.500 6 7 5.500 12.500" fill="none" stroke="#7ab0f8" stroke-width="1.800"/><path d="M45.100 17v4" stroke="#2a7af0" stroke-width="1.800"/><path d="M40.300 20.500l4.700 5.500 4.300-6z" fill="#2a7af0"/></svg>
<!-- Recharger -->
<svg class="bi" style="left:786px" viewBox="0 0 36 36"><g fill="url(#gOrB)" stroke="#c8690e" stroke-width=".9" stroke-linejoin="round"><path d="M31.100 21.600A14 14 0 0 0 21.500 4.600L22 2.100 10.400 7.800l9.100 4.700.5-2.600a8.500 8.500 0 0 1 5.800 10.300z"/><path d="M4.100 14.400A14 14 0 0 0 13.700 31.400L13.200 33.900 24.800 28.200l-9.100-4.700-.5 2.600a8.500 8.500 0 0 1-5.800-10.300z"/></g><path d="M29.500 19a12.300 12.300 0 0 0-8.600-12.800" fill="none" stroke="#ffe08a" stroke-width="1.100" opacity=".8"/><path d="M5.700 17a12.300 12.300 0 0 0 8.600 12.800" fill="none" stroke="#ffe08a" stroke-width="1.100" opacity=".8"/></svg>
<!-- Fermer -->
<svg class="bi" style="width:33px;height:33px;margin-left:-16.500px;top:944.300px;left:862px" viewBox="0 0 36 36"><path d="M2.500 9l6.500-5.500 9 9 9-9 6.500 5.500-9 9.500 9 10-6.500 6-9-10-9 10-6.500-6 9-10z" fill="#ae0e0e" stroke="#9a0c0c" stroke-width=".8" stroke-linejoin="round"/><path d="M2.500 7l6.500-5.500 9 9 9-9 6.500 5.500-9 9.500 9 10-6.500 6-9-10-9 10-6.500-6 9-10z" fill="url(#gRed2)" stroke="#c81818" stroke-width=".6" stroke-linejoin="round"/><path d="M4.500 7l4.500-3.800 9 9 9-9L31.500 7" fill="none" stroke="#ffb4b4" stroke-width="1" opacity=".75"/></svg>
<!-- Quitter -->
<svg class="bi" style="left:921px" viewBox="0 0 36 36"><path d="M27.200 10.400A11.750 11.750 0 1 1 9.200 10.400" fill="none" stroke="#1c60b4" stroke-width="7" stroke-linecap="round"/><path d="M27.200 10.400A11.750 11.750 0 1 1 9.200 10.400" fill="none" stroke="url(#gRing)" stroke-width="5.400" stroke-linecap="round"/><path d="M18.200 5v10.500" stroke="#2a6cbc" stroke-width="6" stroke-linecap="round"/><path d="M18.200 5v10.500" stroke="#8ec2ee" stroke-width="4.200" stroke-linecap="round"/></svg>

<div class="bt" style="left:6px;top:982px;letter-spacing:0.00px">Nouveau</div>
<div class="bt" style="left:66px;top:982px;letter-spacing:0.29px">Modifier</div>
<div class="bt" style="left:123px;top:982px;letter-spacing:-0.30px">Rechercher</div>
<div class="bt" style="left:191px;top:982px;letter-spacing:-0.08px">Initialiser</div>
<div class="bt" style="left:247.5px;top:982px;letter-spacing:-0.08px">Imprimer(F11)</div>
<div class="bt" style="left:331px;top:982px;letter-spacing:0.15px">Imprimer Tout</div>
<div class="bt" style="left:416px;top:982px;letter-spacing:-0.12px">Supprimer(sup)</div>
<div class="bt" style="left:507px;top:982px;letter-spacing:-0.12px">Annuler(Back)</div>
<div class="bt" style="left:591px;top:982px;letter-spacing:-0.31px">Enregistrer(F8)</div>
<div class="bt" style="left:676.5px;top:990px;letter-spacing:-0.13px">Transformer</div>
<div class="bt" style="left:749px;top:982px;letter-spacing:-0.42px">Recharger(F6)</div>
<div class="bt" style="left:831px;top:982px;letter-spacing:-0.52px">Fermer(Esc)</div>
<div class="bt" style="left:902px;top:982px;letter-spacing:0.14px">Quitter</div>
<!--BOTTOM-END-->
</body>
</html>
